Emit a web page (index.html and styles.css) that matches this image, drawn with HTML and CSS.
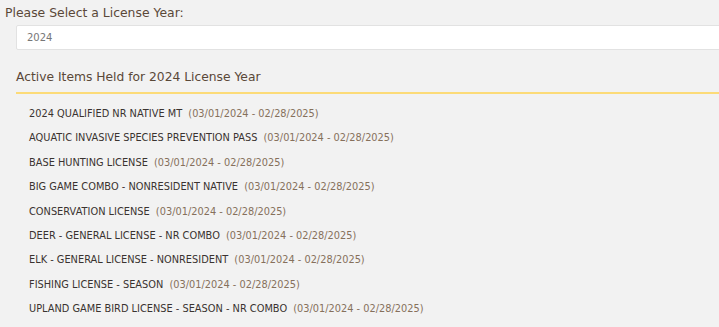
FILE: index.html
```html
<!DOCTYPE html>
<html lang="en">
<head>
    <meta charset="UTF-8">
    <meta name="viewport" content="width=device-width, initial-scale=1.0">
    <title>License Year</title>
    <link rel="stylesheet" href="styles.css">
</head>
<body>
    <div class="page">
        <label class="year-label" for="year">Please Select a License Year:</label>
        <div class="year-field">
            <div class="year-select" id="year">2024</div>
        </div>

        <div class="items">
            <h2 class="items-title">Active Items Held for 2024 License Year</h2>
            <ul class="item-list">
                <li>2024 QUALIFIED NR NATIVE MT <span class="dates">(03/01/2024 - 02/28/2025)</span></li>
                <li>AQUATIC INVASIVE SPECIES PREVENTION PASS <span class="dates">(03/01/2024 - 02/28/2025)</span></li>
                <li>BASE HUNTING LICENSE <span class="dates">(03/01/2024 - 02/28/2025)</span></li>
                <li>BIG GAME COMBO - NONRESIDENT NATIVE <span class="dates">(03/01/2024 - 02/28/2025)</span></li>
                <li>CONSERVATION LICENSE <span class="dates">(03/01/2024 - 02/28/2025)</span></li>
                <li>DEER - GENERAL LICENSE - NR COMBO <span class="dates">(03/01/2024 - 02/28/2025)</span></li>
                <li>ELK - GENERAL LICENSE - NONRESIDENT <span class="dates">(03/01/2024 - 02/28/2025)</span></li>
                <li>FISHING LICENSE - SEASON <span class="dates">(03/01/2024 - 02/28/2025)</span></li>
                <li>UPLAND GAME BIRD LICENSE - SEASON - NR COMBO <span class="dates">(03/01/2024 - 02/28/2025)</span></li>
            </ul>
        </div>
    </div>
</body>
</html>
```

FILE: styles.css
```css
* {
    margin: 0;
    padding: 0;
    box-sizing: border-box;
}

html, body {
    background: #f2f2f2;
    overflow: hidden;
}

body {
    font-family: "DejaVu Sans", sans-serif;
    color: #3a3330;
}

.page {
    width: 740px;
    padding: 4px 0 0 5px;
}

.year-label {
    display: block;
    font-size: 12.4px;
    color: #5a4838;
    line-height: 17px;
}

.year-field {
    padding: 4px 0 0 11px;
}

.year-select {
    background: #fff;
    border: 1px solid #e2e2e2;
    border-radius: 2px;
    height: 25px;
    padding: 0 10px;
    font-size: 10px;
    line-height: 23px;
    color: #777;
}

.items {
    padding: 19px 0 0 11px;
}

.items-title {
    font-size: 12.3px;
    font-weight: normal;
    color: #5a4838;
    line-height: 17px;
    padding-bottom: 6px;
    border-bottom: 2px solid #fcdb78;
}

.item-list {
    list-style: none;
    padding: 8px 0 0 13px;
}

.item-list li {
    font-size: 9.8px;
    line-height: 24.4px;
    color: #3a3330;
}

.dates {
    color: #86705b;
    margin-left: 3px;
}
```
